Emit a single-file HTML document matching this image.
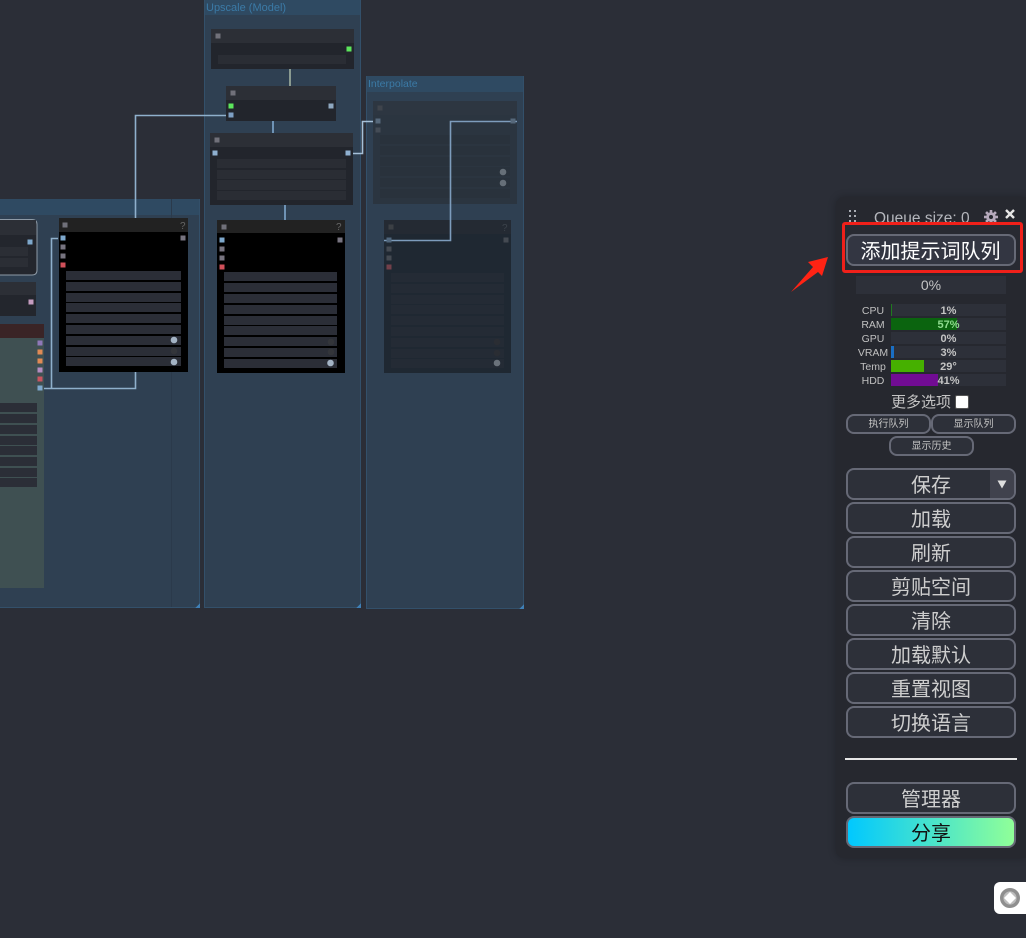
<!DOCTYPE html>
<html lang="zh">
<head>
<meta charset="utf-8">
<title>ComfyUI</title>
<style>
html,body{margin:0;padding:0;width:1026px;height:938px;overflow:hidden;background:#2b2e37;font-family:"Liberation Sans","Noto Sans CJK SC",sans-serif}
svg.g{position:absolute;left:0;top:0}
svg.blur{filter:blur(.35px)}
.p rect{width:5px;height:5px;transform:translate(-.5px,-.5px)}
.lk{shape-rendering:auto;fill:none;stroke-width:1.600}
.panel{position:absolute;left:836px;top:197px;width:190px;height:661px;background:#26282f;border-radius:8px 0 0 8px;box-shadow:0 0 8px rgba(0,0,0,.25)}
.a{position:absolute;box-sizing:border-box}
.btn{position:absolute;box-sizing:border-box;left:846px;width:170px;height:32px;border:2px solid #666976;border-radius:8px;background:#2d3039;color:#cecece;font-size:20px;line-height:33px;text-align:center;white-space:nowrap}
.sm{height:20px;width:85px;font-size:10px;line-height:18px;color:#c4c4c4}
.lbl{position:absolute;left:855px;width:36px;text-align:center;font-size:10.5px;line-height:14px;color:#c0c0c0;height:14px}
.bar{position:absolute;left:891px;width:115px;height:12px;background:#2d3039}
.bar i{position:absolute;left:0;top:0;height:12px;display:block}
.pct{position:absolute;left:891px;width:115px;text-align:center;font-size:11px;line-height:14px;font-weight:bold;color:#c4c4c4;height:14px}
</style>
</head>
<body>
<svg class="g blur" width="1026" height="938" viewBox="0 0 1026 938" xmlns="http://www.w3.org/2000/svg" shape-rendering="crispEdges">
<!-- group 1 -->
<rect x="0" y="199" width="200" height="409" fill="#2f4052"/>
<rect x="0" y="199" width="200" height="16" fill="#2f4a62"/>
<rect x="171" y="199" width="1" height="409" fill="#2b3a4b"/>
<rect x="0" y="607" width="200" height="1" fill="#33506a"/>
<rect x="199" y="199" width="1" height="409" fill="#33506a"/>
<polygon points="200,603 200,608 195,608" fill="#3f7fb5"/>
<!-- group 2 -->
<rect x="204" y="0" width="157" height="608" fill="#2f4052"/>
<rect x="204" y="0" width="157" height="15" fill="#2f4a62"/>
<rect x="204" y="0" width="1" height="608" fill="#33506a"/>
<rect x="360" y="0" width="1" height="608" fill="#33506a"/>
<rect x="204" y="607" width="157" height="1" fill="#33506a"/>
<polygon points="361,603 361,608 356,608" fill="#3f7fb5"/>
<text x="206" y="11" font-family="Liberation Sans" font-size="11" fill="#3b7aa6">Upscale (Model)</text>
<!-- group 3 -->
<rect x="366" y="76" width="158" height="533" fill="#2f4052"/>
<rect x="366" y="76" width="158" height="16" fill="#2f4a62"/>
<rect x="366" y="76" width="1" height="533" fill="#33506a"/>
<rect x="523" y="76" width="1" height="533" fill="#33506a"/>
<rect x="366" y="608" width="158" height="1" fill="#33506a"/>
<polygon points="524,604 524,609 519,609" fill="#3f7fb5"/>
<text x="368" y="87" font-family="Liberation Sans" font-size="10.500" fill="#3b7aa6">Interpolate</text>

<!-- Node F (selected) -->
<path d="M-5 219.500H32Q37 219.500 37 224.500V270Q37 275 32 275H-5Z" fill="#23262d" stroke="#8d9aa6" stroke-width="1" shape-rendering="auto"/>
<rect x="0" y="220" width="36" height="15" fill="#2c2f36"/>
<rect x="0" y="247" width="28" height="9" fill="#2b2e35"/>
<rect x="0" y="258" width="28" height="9" fill="#2b2e35"/>
<!-- Node G -->
<rect x="0" y="282" width="36" height="34" fill="#23262d"/>
<rect x="0" y="282" width="36" height="13" fill="#2c2f36"/>
<!-- Node H -->
<rect x="0" y="324" width="44" height="14" fill="#3a2426"/>
<rect x="0" y="338" width="44" height="250" fill="#3f5052"/>
<g fill="#2b2e37">
<rect x="0" y="403" width="37" height="9"/><rect x="0" y="414" width="37" height="9"/><rect x="0" y="425" width="37" height="9"/><rect x="0" y="436" width="37" height="9"/><rect x="0" y="446" width="37" height="9"/><rect x="0" y="457" width="37" height="9"/><rect x="0" y="468" width="37" height="9"/><rect x="0" y="478" width="37" height="9"/>
</g>

<!-- links under -->
<path class="lk" d="M44 388.500H135.500V115.500H226" stroke="#8fb0cc"/>
<path class="lk" d="M58 238.500H51.500V388" stroke="#8fb0cc"/>
<rect x="289" y="69" width="2" height="17" fill="#8a9a90"/>
<rect x="272" y="121" width="2" height="12" fill="#6f93b5"/>
<rect x="284" y="205" width="2" height="15" fill="#6f93b5"/>
<path class="lk" d="M353 153.500H362.500V121.500H378" stroke="#a5c0d8"/>

<!-- Node A -->
<rect x="211" y="29" width="143" height="40" fill="#22252c"/>
<rect x="211" y="29" width="143" height="14" fill="#2c2f36"/>
<rect x="218" y="55" width="128" height="9" fill="#2a2d34"/>
<!-- Node B -->
<rect x="226" y="86" width="110" height="35" fill="#22252c"/>
<rect x="226" y="86" width="110" height="14" fill="#2c2f36"/>
<!-- Node C -->
<rect x="210" y="133" width="143" height="72" fill="#22252c"/>
<rect x="210" y="133" width="143" height="14" fill="#2c2f36"/>
<g fill="#2a2d34">
<rect x="217" y="159" width="129" height="9"/><rect x="217" y="170" width="129" height="9"/><rect x="217" y="180" width="129" height="10"/><rect x="217" y="191" width="129" height="9"/>
</g>

<!-- Node E -->
<rect x="59" y="218" width="129" height="154" fill="#000"/>
<rect x="59" y="218" width="129" height="14" fill="#222"/>
<text x="180" y="229" font-family="Liberation Sans" font-size="10" fill="#666">?</text>
<g fill="#2b2e37">
<rect x="66" y="271" width="115" height="9"/><rect x="66" y="282" width="115" height="9"/><rect x="66" y="293" width="115" height="9"/><rect x="66" y="303" width="115" height="9"/><rect x="66" y="314" width="115" height="9"/><rect x="66" y="325" width="115" height="9"/><rect x="66" y="336" width="115" height="9"/><rect x="66" y="347" width="115" height="9"/><rect x="66" y="357" width="115" height="9"/>
</g>
<g shape-rendering="auto">
<circle cx="174" cy="340" r="3.300" fill="#a3b3c4"/>
<circle cx="174" cy="351" r="3.300" fill="#33353a"/>
<circle cx="174" cy="362" r="3.300" fill="#a3b3c4"/>
</g>

<!-- Node D -->
<rect x="217" y="220" width="128" height="153" fill="#000"/>
<rect x="217" y="220" width="128" height="13" fill="#222"/>
<text x="336" y="230" font-family="Liberation Sans" font-size="10" fill="#666">?</text>
<g fill="#2b2e37">
<rect x="224" y="272" width="113" height="9"/><rect x="224" y="283" width="113" height="9"/><rect x="224" y="294" width="113" height="9"/><rect x="224" y="305" width="113" height="9"/><rect x="224" y="316" width="113" height="9"/><rect x="224" y="326" width="113" height="9"/><rect x="224" y="337" width="113" height="9"/><rect x="224" y="348" width="113" height="9"/><rect x="224" y="359" width="113" height="9"/>
</g>
<g shape-rendering="auto">
<circle cx="331" cy="342" r="3.300" fill="#33353a"/>
<circle cx="331" cy="352" r="3.300" fill="#33353a"/>
<circle cx="330.500" cy="363" r="3.300" fill="#a3b3c4"/>
</g>

<!-- Node I dim -->
<rect x="373" y="101" width="144" height="103" fill="#2b3540"/>
<rect x="373" y="101" width="144" height="14" fill="#2d3641"/>
<g fill="#29323c">
<rect x="380" y="135" width="130" height="9"/><rect x="380" y="146" width="130" height="9"/><rect x="380" y="157" width="130" height="9"/><rect x="380" y="167" width="130" height="9"/><rect x="380" y="178" width="130" height="9"/><rect x="380" y="189" width="130" height="9"/>
</g>
<g shape-rendering="auto">
<circle cx="503" cy="172" r="3.300" fill="#666f78"/>
<circle cx="503" cy="183" r="3.300" fill="#666f78"/>
</g>
<!-- Node J dim -->
<rect x="384" y="220" width="127" height="153" fill="#1f2832"/>
<rect x="384" y="220" width="127" height="14" fill="#242a33"/>
<g fill="#242b35">
<rect x="391" y="273" width="113" height="9"/><rect x="391" y="284" width="113" height="9"/><rect x="391" y="295" width="113" height="9"/><rect x="391" y="305" width="113" height="9"/><rect x="391" y="316" width="113" height="9"/><rect x="391" y="327" width="113" height="9"/><rect x="391" y="338" width="113" height="9"/><rect x="391" y="349" width="113" height="9"/><rect x="391" y="359" width="113" height="9"/>
</g>
<text x="502" y="231" font-family="Liberation Sans" font-size="10" fill="#3c434b">?</text>
<g shape-rendering="auto">
<circle cx="497" cy="363" r="3.300" fill="#6a727b"/>
<circle cx="497" cy="342" r="3.300" fill="#2a2d33"/>
<circle cx="497" cy="353" r="3.300" fill="#2a2d33"/>
</g>
<!-- Link over dim nodes -->
<path class="lk" d="M517 121.500H450.500V240.500H384" stroke="#7d9cbc"/>

<!-- ports -->
<g class="p" shape-rendering="auto">
<rect x="28" y="240" fill="#7ea8cc"/>
<rect x="29" y="300" fill="#c49cc0"/>
<rect x="38" y="341" fill="#8f78b8"/>
<rect x="38" y="350" fill="#e08a55"/>
<rect x="38" y="359" fill="#e08a55"/>
<rect x="38" y="368" fill="#b48cc0"/>
<rect x="38" y="377" fill="#c85560"/>
<rect x="38" y="386" fill="#7ea8cc"/>
<rect x="216" y="34" fill="#71717a"/>
<rect x="347" y="47" fill="#5ce65c"/>
<rect x="231" y="91" fill="#71717a"/>
<rect x="229" y="104" fill="#5ce65c"/>
<rect x="229" y="113" fill="#7ea0c4"/>
<rect x="329" y="104" fill="#8fa8c0"/>
<rect x="215" y="138" fill="#71717a"/>
<rect x="213" y="151" fill="#8fb0d0"/>
<rect x="346" y="151" fill="#8fb0d0"/>
<rect x="63" y="223" fill="#71717a"/>
<rect x="61" y="236" fill="#7ea8cc"/>
<rect x="61" y="245" fill="#777480"/>
<rect x="61" y="254" fill="#777480"/>
<rect x="61" y="263" fill="#d0505a"/>
<rect x="181" y="236" fill="#777480"/>
<rect x="222" y="225" fill="#71717a"/>
<rect x="220" y="238" fill="#7ea8cc"/>
<rect x="220" y="247" fill="#777480"/>
<rect x="220" y="256" fill="#777480"/>
<rect x="220" y="265" fill="#d0505a"/>
<rect x="338" y="238" fill="#777480"/>
<rect x="378" y="106" fill="#3f444c"/>
<rect x="376" y="119" fill="#56687a"/>
<rect x="376" y="128" fill="#444c56"/>
<rect x="511" y="119" fill="#56687a"/>
<rect x="389" y="225" fill="#3c4045"/>
<rect x="387" y="238" fill="#50667c"/>
<rect x="387" y="247" fill="#444a52"/>
<rect x="387" y="256" fill="#444a52"/>
<rect x="387" y="265" fill="#73404a"/>
<rect x="504" y="238" fill="#444a52"/>
</g>
</svg>

<div class="panel"></div>

<svg class="g" width="1026" height="938" viewBox="0 0 1026 938" xmlns="http://www.w3.org/2000/svg">
<polygon points="828,257 808,262 813,267 791,292 818,272 822,276" fill="#ff2314"/>
<g fill="#a9acb3" shape-rendering="crispEdges">
<rect x="849" y="210" width="2" height="2"/><rect x="854" y="210" width="2" height="2"/>
<rect x="849" y="215" width="2" height="2"/><rect x="854" y="215" width="2" height="2"/>
<rect x="849" y="220" width="2" height="2"/><rect x="854" y="220" width="2" height="2"/>
</g>
<g fill="#b5a9bb">
<circle cx="991" cy="217" r="4.800"/>
<rect x="989.700" y="210" width="2.600" height="14"/>
<rect x="984" y="215.700" width="14" height="2.600"/>
<rect x="989.700" y="210" width="2.600" height="14" transform="rotate(45 991 217)"/>
<rect x="989.700" y="210" width="2.600" height="14" transform="rotate(-45 991 217)"/>
<circle cx="991" cy="217" r="2" fill="#26282f"/>
</g>
<path d="M1006 210L1014 218M1014 210L1006 218" stroke="#e6e6e6" stroke-width="2.400" fill="none"/>
</svg>

<div class="a" style="left:874px;top:208px;width:100px;height:14px;overflow:hidden;font-size:15.500px;line-height:22px;color:#b4b6bc;white-space:nowrap">Queue size: 0</div>

<div class="a" style="left:842px;top:222px;width:181px;height:51px;border:3px solid #f0201a;border-radius:3px;background:#282a32"></div>
<div class="btn" style="top:234px;background:#333642;color:#fff;text-indent:-1px">添加提示词队列</div>

<div class="a" style="left:856px;top:276px;width:150px;height:18px;background:#2d3039;color:#c4c4c4;font-size:14px;line-height:19px;text-align:center">0%</div>

<div class="lbl" style="top:304px">CPU</div><div class="bar" style="top:304px"><i style="width:1px;background:#1f7a1f"></i></div><div class="pct" style="top:304px">1%</div>
<div class="lbl" style="top:318px">RAM</div><div class="bar" style="top:318px"><i style="width:66px;background:#0b640f"></i></div><div class="pct" style="top:318px;color:#8fdc8f">57%</div>
<div class="lbl" style="top:332px">GPU</div><div class="bar" style="top:332px"></div><div class="pct" style="top:332px">0%</div>
<div class="lbl" style="top:346px">VRAM</div><div class="bar" style="top:346px"><i style="width:3px;background:#1a6fc4"></i></div><div class="pct" style="top:346px">3%</div>
<div class="lbl" style="top:360px">Temp</div><div class="bar" style="top:360px"><i style="width:33px;background:#46b000"></i></div><div class="pct" style="top:360px">29°</div>
<div class="lbl" style="top:374px">HDD</div><div class="bar" style="top:374px"><i style="width:47px;background:#710c93"></i></div><div class="pct" style="top:374px">41%</div>

<div class="a" style="left:891px;top:394px;width:62px;font-size:15px;line-height:18px;color:#c4c4c4;white-space:nowrap">更多选项</div>
<div class="a" style="left:956px;top:396px;width:12px;height:12px;background:#fff;box-shadow:0 0 0 1px #555;border-radius:1px"></div>

<div class="btn sm" style="left:846px;top:414px;line-height:18px">执行队列</div>
<div class="btn sm" style="left:931px;top:414px;line-height:18px">显示队列</div>
<div class="btn sm" style="left:889px;top:436px;line-height:18px">显示历史</div>

<div class="btn" style="top:468px;overflow:hidden">保存<span class="a" style="right:0;top:0;width:24px;height:28px;background:#40424d"></span><svg class="a" style="right:7px;top:10px" width="10" height="9" viewBox="0 0 10 9"><polygon points="0.500,0.500 9.500,0.500 5,8.500" fill="#dedede"/></svg></div>
<div class="btn" style="top:502px">加载</div>
<div class="btn" style="top:536px">刷新</div>
<div class="btn" style="top:570px">剪贴空间</div>
<div class="btn" style="top:604px">清除</div>
<div class="btn" style="top:638px">加载默认</div>
<div class="btn" style="top:672px">重置视图</div>
<div class="btn" style="top:706px">切换语言</div>
<div class="a" style="left:845px;top:758px;width:172px;height:2px;background:#e6e6e6"></div>
<div class="btn" style="top:782px">管理器</div>
<div class="btn" style="top:816px;background:linear-gradient(90deg,#00c8ff,#90ff98);color:#111">分享</div>

<div class="a" style="left:994px;top:882px;width:32px;height:32px;background:#fff;border-radius:6px 0 0 6px"></div>
<svg class="g" width="1026" height="938" viewBox="0 0 1026 938" xmlns="http://www.w3.org/2000/svg">
<circle cx="1010" cy="898" r="8.300" fill="#bdbdbd" stroke="#8f8f8f" stroke-width="3.400"/>
<polygon points="1010,892 1016,898 1010,904 1004,898" fill="#fff"/>
</svg>
</body>
</html>
